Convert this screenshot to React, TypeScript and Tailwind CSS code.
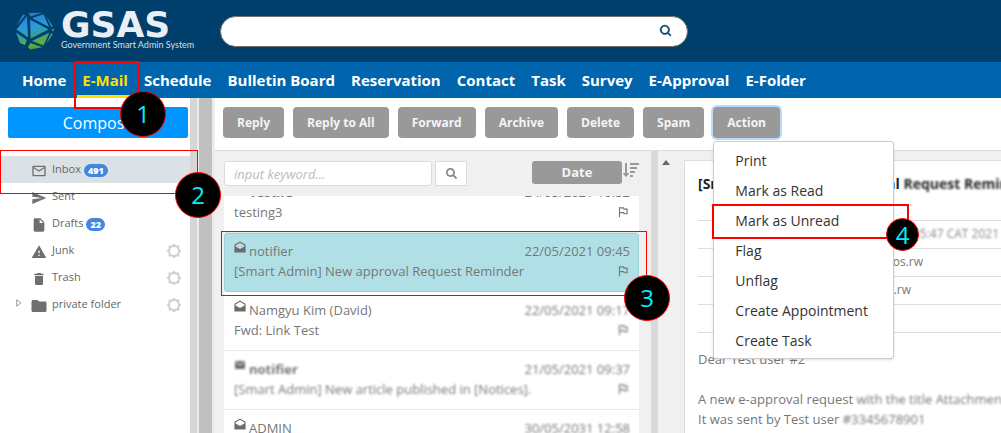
import React from "react";
import {
  MdOutlineEmail, MdSend, MdInsertDriveFile, MdWarning, MdDelete, MdFolder,
  MdEmail, MdOutlineFlag,
} from "react-icons/md";
import { FaSortAmountDown, FaSearch } from "react-icons/fa";
import { BiSearch } from "react-icons/bi";

const NAV = ["Home", "E-Mail", "Schedule", "Bulletin Board", "Reservation", "Contact", "Task", "Survey", "E-Approval", "E-Folder"];
const ACTIONS = ["Reply", "Reply to All", "Forward", "Archive", "Delete", "Spam"];
const MENU = ["Print", "Mark as Read", "Mark as Unread", "Flag", "Unflag", "Create Appointment", "Create Task"];

const FOLDERS = [
  { name: "Inbox", Icon: MdOutlineEmail, count: 491, active: true },
  { name: "Sent", Icon: MdSend },
  { name: "Drafts", Icon: MdInsertDriveFile, count: 22 },
  { name: "Junk", Icon: MdWarning, gear: true },
  { name: "Trash", Icon: MdDelete, gear: true },
  { name: "private folder", Icon: MdFolder, gear: true, expandable: true },
];

type Mail = { from: string; date: string; subject: string; unread?: boolean; selected?: boolean; haze?: "right" | "all" };

const MAILS: Mail[] = [
  { from: "Testir3", date: "24/05/2021 10:52", subject: "testing3", unread: true },
  { from: "notifier", date: "22/05/2021 09:45", subject: "[Smart Admin] New approval Request Reminder", selected: true },
  { from: "Namgyu Kim (David)", date: "22/05/2021 09:17", subject: "Fwd: Link Test", haze: "right" },
  { from: "notifier", date: "21/05/2021 09:37", subject: "[Smart Admin] New article published in [Notices].", unread: true, haze: "all" },
  { from: "ADMIN", date: "30/05/2031 12:58", subject: "", haze: "right" },
];

function Logo() {
  return (
    <a href="#home" className="flex w-[205px] shrink-0 items-center gap-[6px] pl-[15px] text-white">
      <svg viewBox="0 0 40 40" className="size-10 shrink-0">
        <defs>
          <linearGradient id="ball" gradientUnits="userSpaceOnUse" x1="16" y1="0" x2="24" y2="40">
            <stop offset="0" stopColor="#2377c4" />
            <stop offset="0.4" stopColor="#2d9bdd" />
            <stop offset="0.6" stopColor="#35a090" />
            <stop offset="0.8" stopColor="#5eae40" />
            <stop offset="1" stopColor="#4d9a3c" />
          </linearGradient>
        </defs>
        <g fill="url(#ball)">
          <path d="M12 5 13 26.5 1.5 18.5z" />
          <path d="M8 3.5 10.5 4 1.5 14.5z" />
          <path d="M13.5 2 27 1.8 15.5 5.5z" />
          <path d="M17 7 28.5 3.2 34 16z" />
          <path d="M15 8.5 15.7 27.5 33.5 18.5z" />
          <path d="M17 30 34.5 21.5 28.5 34.5z" />
          <path d="M15.5 32 27.5 36.3 15 38.5 13 36z" />
          <path d="M1 21.5 11.8 29 10 34 5 32z" />
          <path d="M31 4.5 38 16 36 15.5z" />
          <path d="M36 18.5 39.5 18 38 20.5z" />
          <path d="M31 33 38 23 36 22.5z" />
        </g>
      </svg>
      <span className="flex flex-col">
        <span className="font-['DejaVu_Sans',sans-serif] text-[36px] leading-7 font-bold text-[#e9eff4]">GSAS</span>
        <span className="font-[Lato,sans-serif] text-[9px] leading-3 whitespace-nowrap text-[#d3dfe8]">Government Smart Admin System</span>
      </span>
    </a>
  );
}

function Gear() {
  return (
    <svg viewBox="0 0 16 16" className="size-4">
      <path d="M8 .6 10 2.6h3.4V6l2 2-2 2v3.4H10l-2 2-2-2H2.6V10l-2-2 2-2V2.6H6z" fill="#d0d0d0" />
      <circle cx="8" cy="8" r="4" fill="#fff" />
    </svg>
  );
}

function OpenEnvelope({ className }: { className: string }) {
  return (
    <svg viewBox="0 0 12 12" className={className}>
      <path fill="currentColor" fillRule="evenodd" d="M6 .4 11.6 3.8V11a.6.6 0 0 1-.6.6H1a.6.6 0 0 1-.6-.6V3.8zM6 1.8 1.5 4.5v1L6 8l4.5-2.5v-1z" />
    </svg>
  );
}

function Sidebar() {
  return (
    <aside className="flex w-[190px] shrink-0 flex-col bg-white pt-[9px]">
      <button className="mr-[2px] ml-2 h-[31px] rounded-[2px] bg-[#0095ff] text-[16px] text-white">Compose</button>
      <ul className="mt-[18px]">
        {FOLDERS.map(({ name, Icon, count, active, gear, expandable }) => (
          <li key={name} className={`relative flex h-[27px] items-center pr-2 pl-[30px] ${active ? "bg-[#dce1e5]" : ""}`}>
            {expandable && (
              <svg viewBox="0 0 6 8" className="absolute top-2 left-4 h-2 w-[6px]"><path d="M.7.8 4.8 4 .7 7.2z" fill="none" stroke="#999" /></svg>
            )}
            <a href={`#${name}`} className="flex items-center text-[11px] text-[#666]">
              <span className="mt-[3px] mr-1 flex w-[18px] justify-center text-[#6f6f6f]"><Icon className={expandable ? "size-[18px]" : "size-4"} /></span>
              {name}
              {count && <span className="mt-[2px] ml-[3px] rounded-full bg-[#4187e2] px-1 text-[9px] leading-[13px] font-extrabold text-white">{count}</span>}
            </a>
            {gear && <button aria-label={`${name} settings`} className="ml-auto"><Gear /></button>}
          </li>
        ))}
      </ul>
    </aside>
  );
}

function MailRow({ mail }: { mail: Mail }) {
  const right = mail.haze ? "blur-[1px]" : "";
  const all = mail.haze === "all" ? "blur-[1px]" : "";
  const Icon = mail.unread ? MdEmail : OpenEnvelope;
  return (
    <li className={`h-[59px] shrink-0 border pt-[7px] pr-2 pl-[9px] ${mail.selected ? "rounded-[3px] border-[#9fcfd3] bg-[#b0e0e6]" : "border-transparent border-b-[#e8e8e8] bg-white"}`}>
      <div className="flex justify-between leading-5">
        <span className={`flex items-center ${all} ${mail.unread ? "font-bold" : ""}`}>
          <Icon className="mr-[3px] mb-2 size-3 text-[#6c6c6c]" />{mail.from}
        </span>
        <span className={right}>{mail.date}</span>
      </div>
      <div className="flex items-center justify-between leading-5">
        <span className={all}>{mail.subject}</span>
        <MdOutlineFlag className={`size-[14px] ${right}`} />
      </div>
    </li>
  );
}

function MailList() {
  return (
    <section className="flex w-[436px] shrink-0 flex-col overflow-hidden bg-[#f0f0f0] pr-3 pl-[9px]">
      <form className="mt-[10px] flex h-[25px] items-center">
        <input aria-label="Keyword" placeholder="input keyword..." className="h-[25px] w-[208px] rounded-[3px] border border-[#ddd] bg-white px-[9px] text-[13px] italic placeholder:text-[#bbb]" />
        <button type="button" aria-label="Search mail" className="ml-[3px] flex h-[25px] w-8 items-center justify-center border border-[#ddd] bg-white text-[#888]"><FaSearch className="size-[11px]" /></button>
        <button type="button" className="mr-[1px] mb-[2px] ml-auto h-[23px] w-[90px] rounded-[3px] bg-[#999] text-[13px] font-bold text-[#f4f4f4]">Date</button>
        <button type="button" aria-label="Sort order" className="mb-2 text-[#999]"><FaSortAmountDown className="size-4" /></button>
      </form>
      <div className="mt-[10px] flex min-h-0 flex-1 flex-col overflow-hidden text-[13px] text-[#777]">
        <ul className="-mt-[22px] flex flex-col">
          {MAILS.map((m) => <MailRow key={m.date} mail={m} />)}
        </ul>
      </div>
    </section>
  );
}

function Reader() {
  const row = "h-7 w-full border-t border-[#ddd] text-[12px]";
  return (
    <section className="flex min-w-0 flex-1 overflow-hidden bg-[#f0f0f0] pt-[9px]">
      <svg viewBox="0 0 8 5" className="mr-[14px] ml-1 h-[5px] w-2 shrink-0"><path d="M4 0 8 5H0z" fill="#666" /></svg>
      <article className="min-w-0 flex-1 border-t border-l border-[#ddd] bg-white pl-[13px] text-[13px] whitespace-nowrap text-[#777]">
        <h2 className="h-[59px] pt-3 text-[14px] font-bold text-[#222]">[Smart Admin] New approval <span className="blur-[1px]">Request Reminder</span></h2>
        <div className={row}><p className="w-[301px] text-right leading-[26px] text-[#888] blur-[1px]">Sat 22 May 09:45:47 CAT 2021</p></div>
        <div className={row}><p className="w-[225px] text-right leading-[26px]">notifier@aos.rw</p></div>
        <div className={row}><p className="w-[213px] text-right leading-[26px]">user@aos.rw</p></div>
        <div className={row} />
        <div className="border-t border-[#ddd] pt-4 leading-5">
          <p>Dear Test user #2</p>
          <p className="mt-5">A new e-approval request <span className="inline-block blur-[1px]">with the title Attachment</span></p>
          <p>It was sent by Test user <span className="inline-block blur-[1px]">#3345678901</span></p>
        </div>
      </article>
    </section>
  );
}

function Marker({ n, frame, dot }: { n: number; frame: string; dot: string }) {
  return (
    <>
      <div className={`pointer-events-none absolute border-[#f00] ${frame}`} />
      <div className={`pointer-events-none absolute flex items-center justify-center rounded-full border border-[#f00] bg-black text-[24px] leading-none text-[#00f0ff] ${dot}`}>{n}</div>
    </>
  );
}

export default function App() {
  const button = "h-[31px] rounded-[4px] bg-[#999] px-[14px] text-[12px] font-bold whitespace-nowrap text-[#f4f4f4]";
  return (
    <div className="relative flex h-screen flex-col overflow-hidden bg-white font-['Open_Sans',sans-serif]">
      <header className="flex h-[62px] shrink-0 items-center bg-[#003f6b]">
        <Logo />
        <form className="ml-[15px] flex h-[31px] w-[468px] items-center rounded-full border border-[#77706c] bg-white pr-[14px] pl-4">
          <input aria-label="Search" className="min-w-0 flex-1 outline-none" />
          <button type="button" aria-label="Search" className="text-[#003f6b]"><BiSearch className="size-[14px]" strokeWidth={1} /></button>
        </form>
      </header>
      <nav className="flex h-9 shrink-0 gap-[6px] bg-[#0065ac] pl-[17px] text-[15px] font-bold whitespace-nowrap text-white">
        {NAV.map((n) => (
          <a key={n} href={`#${n}`} className={`flex items-center border-b-3 px-[5px] pt-[3px] ${n === "E-Mail" ? "border-[#ffdf00] text-[#ffdf00]" : "border-transparent"}`}>{n}</a>
        ))}
      </nav>
      <div className="flex min-h-0 flex-1">
        <Sidebar />
        <div className="w-[7px] shrink-0 bg-[#d6d6d6]" />
        <div className="w-[18px] shrink-0 border-r-3 border-l-2 border-[#ececec] bg-[#c0c0c0]" />
        <main className="flex min-w-0 flex-1 flex-col">
          <div className="flex h-[53px] shrink-0 items-start gap-[9px] border-b border-[#ddd] pt-[9px] pl-2">
            {ACTIONS.map((a) => <button key={a} className={button}>{a}</button>)}
            <div className="relative">
              <button aria-expanded="true" className={`${button} ring-2 ring-[#b8dafc]`}>Action</button>
              <ul className="absolute top-[34px] left-0 z-10 w-[181px] rounded-[3px] border border-[#ccc] bg-white py-[3px] text-[14px] text-[#333] shadow-sm">
                {MENU.map((m) => <li key={m}><button className="block h-[30px] w-full pl-[21px] text-left">{m}</button></li>)}
              </ul>
            </div>
          </div>
          <div className="flex min-h-0 flex-1">
            <MailList />
            <div className="w-[7px] shrink-0 bg-[#d8d8d8]" />
            <Reader />
          </div>
        </main>
      </div>
      <div className="pointer-events-none absolute inset-0 z-20">
        <Marker n={1} frame="left-[74px] top-[61px] h-12 w-[66px] border-2" dot="left-[120px] top-[91px] size-[46px]" />
        <Marker n={2} frame="left-0 top-[150px] h-11 w-[198px] border" dot="left-[175px] top-[172px] size-[46px]" />
        <Marker n={3} frame="left-[221px] top-[231px] h-[65px] w-[426px] border" dot="left-[624px] top-[275px] size-[46px]" />
        <Marker n={4} frame="left-[712px] top-[204px] h-[35px] w-[197px] border-2" dot="left-[886px] top-[218px] size-[33px]" />
      </div>
    </div>
  );
}
